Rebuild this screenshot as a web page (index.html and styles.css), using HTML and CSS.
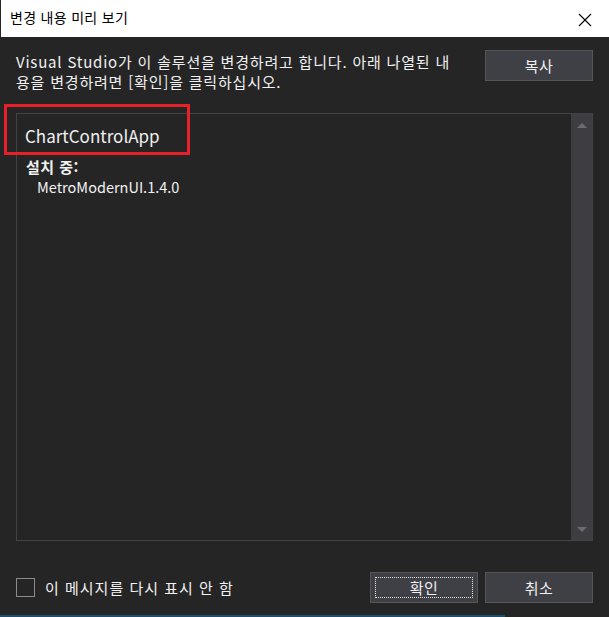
FILE: index.html
```html
<!DOCTYPE html>
<html lang="ko">
<head>
<meta charset="utf-8">
<link rel="stylesheet" href="styles.css">
</head>
<body>
<div class="window">
  <div class="titlebar">
    <span class="title">변경 내용 미리 보기</span>
    <svg class="close" width="14" height="14" viewBox="0 0 14 14"><path d="M1 1L13 13M13 1L1 13" stroke="#000" stroke-width="1.1" fill="none"/></svg>
  </div>
  <div class="content">
    <div class="desc-row">
      <p class="desc">Visual Studio가 이 솔루션을 변경하려고 합니다. 아래 나열된 내용을 변경하려면 [확인]을 클릭하십시오.</p>
      <button class="btn copy">복사</button>
    </div>
    <div class="listbox">
      <div class="list-inner">
        <div class="project">ChartControlApp</div>
        <div class="section">설치 중:</div>
        <div class="item">MetroModernUI.1.4.0</div>
      </div>
      <div class="scrollbar">
        <span class="arrow up"></span>
        <span class="arrow down"></span>
      </div>
    </div>
    <div class="footer">
      <label class="check"><span class="box"></span><span>이 메시지를 다시 표시 안 함</span></label>
      <div class="buttons">
        <button class="btn ok"><span class="focus">확인</span></button>
        <button class="btn">취소</button>
      </div>
    </div>
  </div>
  <div class="highlight"></div>
  <div class="taskline"></div>
</div>
</body>
</html>
```
FILE: styles.css
```css
html, body {
  margin: 0;
  padding: 0;
  background: #252526;
}
body {
  font-family: "Noto Sans CJK KR", "Noto Sans", sans-serif;
  color: #f1f1f1;
}
.window {
  position: relative;
  width: 609px;
  height: 617px;
  background: #252526;
  overflow: hidden;
}
.titlebar {
  height: 37px;
  background: #ffffff;
  margin-left: 1px;
  display: flex;
  align-items: center;
  justify-content: space-between;
  padding: 0 17px 0 9px;
  box-sizing: border-box;
}
.title {
  color: #000;
  font-size: 14px;
  line-height: 1;
  letter-spacing: 0.3px;
  position: relative;
  top: -2px;
}
.close {
  position: relative;
  top: 1px;
}
.content {
  padding: 15px 16px 0 16px;
}
.desc-row {
  display: flex;
  justify-content: space-between;
  align-items: flex-start;
  height: 61px;
}
.desc {
  margin: 0;
  width: 440px;
  font-size: 15px;
  line-height: 20px;
  color: #f1f1f1;
  letter-spacing: 0.8px;
}
.btn {
  width: 108px;
  height: 31px;
  background: #3f3f46;
  border: 1px solid #555558;
  color: #f1f1f1;
  font-family: "Noto Sans CJK KR", sans-serif;
  font-size: 15px;
  letter-spacing: 0.5px;
  padding: 0;
  display: flex;
  align-items: center;
  justify-content: center;
  box-sizing: border-box;
}
.copy {
  position: relative;
  top: -2px;
}
.listbox {
  height: 428px;
  border: 1px solid #434346;
  box-sizing: border-box;
  display: flex;
}
.list-inner {
  flex: 1;
  padding: 9px 0 0 8px;
}
.project {
  font-size: 17px;
  line-height: 26px;
  color: #f1f1f1;
}
.section {
  font-size: 15px;
  font-weight: bold;
  line-height: 20px;
  margin-top: 8px;
  margin-left: 1px;
  letter-spacing: 0.5px;
}
.item {
  font-size: 14.5px;
  line-height: 20px;
  margin-left: 12px;
  margin-top: 0;
}
.scrollbar {
  width: 21px;
  background: #3e3e42;
  display: flex;
  flex-direction: column;
  justify-content: space-between;
  align-items: center;
  padding: 9px 0 8px;
  box-sizing: border-box;
}
.arrow {
  width: 0;
  height: 0;
  border-left: 5px solid transparent;
  border-right: 5px solid transparent;
}
.arrow.up {
  border-bottom: 5px solid #6b6b70;
}
.arrow.down {
  border-top: 5px solid #6b6b70;
}
.footer {
  display: flex;
  justify-content: space-between;
  align-items: center;
  margin-top: 31px;
}
.check {
  display: flex;
  align-items: center;
  gap: 10px;
  font-size: 15px;
  letter-spacing: 1px;
  color: #f1f1f1;
}
.box {
  width: 19px;
  height: 19px;
  border: 1px solid #8c8c8c;
  box-sizing: border-box;
  display: inline-block;
}
.buttons {
  display: flex;
  gap: 7px;
}
.ok {
  padding: 4px;
}
.focus {
  flex: 1;
  align-self: stretch;
  border: 1px dotted #e6e6e6;
  display: flex;
  align-items: center;
  justify-content: center;
}
.highlight {
  position: absolute;
  left: 4px;
  top: 104px;
  width: 186px;
  height: 51px;
  border: 3px solid #e8202a;
  box-sizing: border-box;
}
.taskline {
  position: absolute;
  left: 0;
  bottom: 0;
  width: 505px;
  height: 2px;
  background: #1b4f72;
}
```
